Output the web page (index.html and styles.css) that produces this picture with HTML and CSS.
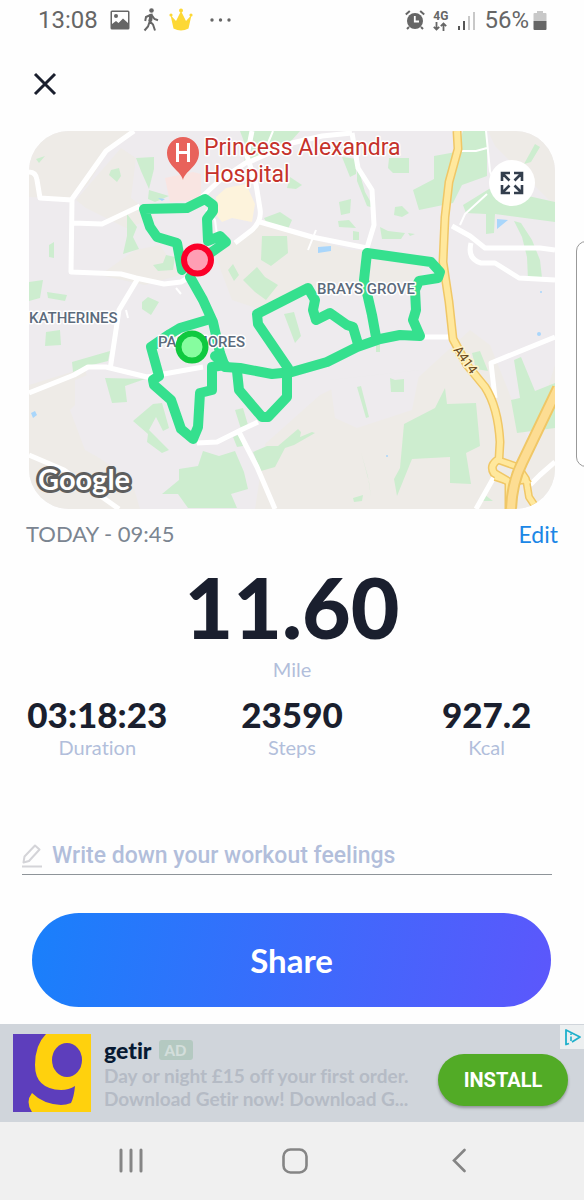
FILE: index.html
```html
<!DOCTYPE html>
<html lang="en">
<head>
  <meta charset="utf-8">
  <meta name="viewport" content="width=device-width, initial-scale=1">
  <title>Workout summary</title>
  <link rel="stylesheet" href="styles.css">
</head>
<body>
  <div class="screen">
    <header class="status">
      <span class="clock">13:08</span>
      <svg class="status-picture" width="20" height="20" viewBox="0 0 20 20">
        <path fill="#666" fill-rule="evenodd" d="M2 0.500h16a1.500 1.500 0 0 1 1.500 1.500v16a1.500 1.500 0 0 1-1.500 1.500H2A1.500 1.500 0 0 1 .5 18V2A1.500 1.500 0 0 1 2 .5zM2 2v12l4-3 2.500 2L13 8.500l5 4.500V2z"/>
        <circle cx="6" cy="6" r="2" fill="#666"/>
      </svg>
      <svg class="status-walk" width="16" height="24" viewBox="0 0 16 24">
        <circle cx="8.500" cy="2.500" r="2.300" fill="#666"/>
        <path d="M8 6.500L6.500 13l3.500 3.500 2 6M6.500 14L5 18.500l-3.500 4M7.500 7L3 9l-.8 4M9 7.500l2.500 3.500 3.500 1.200" fill="none" stroke="#666" stroke-width="2"/>
        <path d="M6.500 6l3-.5.5 3-1 5-3.500-.5z" fill="#666"/>
      </svg>
      <svg class="status-crown" width="24" height="24" viewBox="0 0 24 24">
        <path d="M1.500 7l5.500 6 5-10 5 10 5.500-6-3 13.500q-7.500 4-15 0z" fill="#fdd835"/>
        <g fill="#fdd835"><circle cx="12" cy="2.500" r="2"/><circle cx="2" cy="7" r="1.600"/><circle cx="22" cy="7" r="1.600"/></g>
      </svg>
      <svg class="status-more" width="22" height="4" viewBox="0 0 22 4">
        <g fill="#666"><circle cx="2" cy="2" r="1.700"/><circle cx="10.500" cy="2" r="1.700"/><circle cx="19" cy="2" r="1.700"/></g>
      </svg>

      <svg class="status-alarm" width="20" height="20" viewBox="0 0 20 20">
        <circle cx="10" cy="11" r="8" fill="#666"/>
        <path d="M.8 4.500l4-3.500M19.200 4.500l-4-3.500M4 17l-2 2M16 17l2 2" stroke="#666" stroke-width="2"/>
        <path d="M9.800 6v5.500H14" fill="none" stroke="#fff" stroke-width="1.800"/>
      </svg>
      <span class="network">
        <span>4G</span>
        <svg width="14" height="9" viewBox="0 0 14 9">
          <path d="M3.500 0v7.500M.8 4.800l2.700 2.700 2.700-2.700M10.500 9V1.500M7.800 4.200l2.700-2.700 2.700 2.700" fill="none" stroke="#666" stroke-width="1.800"/>
        </svg>
      </span>
      <svg class="status-signal" width="18" height="19" viewBox="0 0 18 19">
        <path d="M2 15v4M7 10v9" stroke="#555" stroke-width="2"/>
        <path d="M12 5v14M17 1v18" stroke="#c8c8c8" stroke-width="2"/>
      </svg>
      <span class="battery-text">56%</span>
      <svg class="status-battery" width="14" height="19" viewBox="0 0 14 19">
        <path d="M4 0h6v2h2.500q1 0 1 1v7H.5V3q0-1 1-1H4z" fill="#c8c8c8"/>
        <path d="M.5 10h13v8q0 1-1 1h-11q-1 0-1-1z" fill="#666"/>
      </svg>
    </header>

    <button class="close" aria-label="Close">
      <svg width="24" height="24" viewBox="0 0 24 24"><path d="M2 2l20 20M22 2L2 22" stroke="#1a1f2e" stroke-width="3"/></svg>
    </button>

    <main>
      <section class="map">
        <svg class="map-canvas" viewBox="29 131 526 378">
          <!-- land -->
          <path fill="#eeebee" d="M29 131h526v378H29z"/>
          <g fill="#eeebe7">
            <path d="M29 131h105l-28 23-18 30-16 15-43-2z"/>
            <path d="M76 200l45-52 15 10-5 40 25 20-30 10-40-20z"/>
            <path d="M29 385l56-17 5 22-20 20 15 40 45 25 10 34H29z"/>
            <path d="M135 250l25-5 20 30-35 10-45-10z"/>
            <path d="M215 255l50-35 30 15 75 20-8 25-45 5-55 25-30-10z"/>
            <path d="M320 395l30-15 60 5 60-55 20 15 40 100 25-80v144H255l10-65z"/>
            <path d="M488 131h67v75l-60-60zM340 250l30 0 55 10-5 20-60 10z"/>
          </g>
          <path fill="#eeebee" d="M75 380l25-10 10 50 55 55-10 20-60-40-20-50zM330 380l90-10-8 40-55 18-22-10z"/>
          <path fill="#f9e5e2" d="M165 178l28-6 8 2v26l-31 2z"/>
          <path fill="#fdf3dc" d="M216 197l10-9 20-4 9 20-3 18-20-4-10 4-5-6z"/>
          <!-- parks -->
          <g fill="#cdedcf">
            <path d="M136 158l18-1v12l-5 20-8-18zM111 170l8-2 2 8-4 6-8-7zM36 159l9-3-6 7zM127 214l10 13-4 10 6 12-16 5 4-18z"/>
            <path d="M149 190l20 6-14 6-7-3zM153 265l10-2 3-8 9 2-2 13-15 1zM29 282l14-2-3 18-11 3zM47 292l20 3-2 6-17-3zM142 302l6-5 11 5-8 13-9-6zM49 245l5-3v16l-5-1z"/>
            <path d="M46 332l14-2 1 15-16 1zM72 362l38-11-2 10-20 5-15 6zM105 378l40 1-20 7 2 16-15 1zM133 421l20-17 9-1 7 25-6 3-7-14-7 13 8 8 12 12-7 3-15-11 1-8z"/>
            <path d="M162 494l17-14v-11l19-3 5-15 16 5 16-5 9 21 4 17-17 5 6 14h-49l-10-14zM235 410l8-2 5 17-7 4zM233 437l7-3 3 12-6 1zM253 452l14-6h11l20-17 3 3-1 5 12-5 3 1-21 12-9 3-10 19-14 4z"/>
            <path d="M262 236l25 0 1 17-17 13-10-6zM264 218l16-6 12 8-4 9-20-4zM243 280l14-13 8 10 13 8-12 15-11-8zM228 270l5-6 6 11-5 6zM284 314l10-2 7 24-6 7z"/>
            <path d="M339 202l12-3-1 14-9 2zM338 221l11-1 7 8-17-1zM290 177l12 8-6 4-9-1zM342 157l15 2-1 15-6 3zM357 164l8 28 9 16-7-2-10-25zM353 231l6 1v8h-6z"/>
            <path d="M389 158h20v15h-16l-5-5zM413 190l21-11v-23l22-4 7-21h24v45l-25 9-9 18-34 7zM395 207l7-1 7 7-7 4-8-2zM380 227l8 4 17 2-4 6h-19zM408 233l7 1-5 2z"/>
            <path d="M463 205l26-16 30 5 36 8v20l-60-8-1 19-8 1v-20l-20-1zM514 221l7 2 11 17 8 20 2 18-14 2-1-23-5-20zM535 144l5 3-9 15-7 2z"/>
            <path d="M404 424l31-16 10-20 2 16 29-1 4 43-14 7 5 31-21-1v-26l-38 2-15 37-3-17 6-11zM390 378l5 2 9-1v13h-13zM514 360l7-3 14 34 20-8v45l-38 5-6-33 9-2zM357 387l4-1 8 31-3 1zM361 452l8 30 2 15-3-20zM353 498l10-3-1 6-8 1z"/>
            <path d="M472 353l8-2 8 20-12-2zM485 495l8 6h-11zM397 486l5-18-6 14zM240 131h60l-16 18-40 15 2-17zM376 345l4-2v9h-4z"/>
          </g>
          <g fill="#a9d6fb">
            <path d="M318 247l13-1v5l-13 2zM497 219l11 1-11 9zM31 413l4-2 2 4-4 3zM158 198l7 1-3 2z"/>
            <circle cx="539" cy="334" r="2"/><circle cx="387" cy="456" r="1"/><circle cx="541" cy="292" r="1"/>
          </g>
          <!-- small roads -->
          <g class="road">
            <path d="M134 131l-28 20-17 24-17 24M29 172q7 0 8 8l3 18 32 2-1 72 50 2 15 4 28 6 17-2 7-4M73 223l29 1 38-18"/>
            <path d="M137 280l-18 30-9 60M29 393l45-18 14-8h18l41 10 39-7 17-3"/>
            <path d="M197 443l20-1 26-13 15-7M239 432l18 35 18 42M29 455l35 15 55 39"/>
            <path d="M252 131l-5 25 9 28 4 25q2 12-8 21l-17 13M190 208l30-28 27-18M247 163l45-20 30-7 30-3M352 133l6 35 14 22 2 35-7 23-55-11-52-15"/>
            <path d="M452 226l18 10 15 12h55l15 2M471 243q-4 16 10 20h14l24 15 36 2M420 337h30M555 337l-64 26 4 35M494 477l-18 32M555 462l-15 13-10 10"/>
          </g>
          <path class="lane" d="M486 131l4 40 4 10M460 225l5-11 22-20M462 151h14l11-3M217 235l-2-15-9-10M126 310l2 8M176 288l5 6M268 143l5-12M316 230l-8 20"/>
          <!-- A414 and the bypass -->
          <g fill="none" stroke-linejoin="round">
            <path d="M457 131l1 18-9 33-4 35-2 45 6 40 4 37 14 26 18 22q13 20 15 55l-1 17q-10 6-5 14l15 9v27" stroke="#f0c766" stroke-width="9"/>
            <path d="M498 460l20 7 8 12 3 18 8 12M495 477l15 5 15-2 4 4" stroke="#f0c766" stroke-width="8"/>
            <path d="M457 131l1 18-9 33-4 35-2 45 6 40 4 37 14 26 18 22q13 20 15 55l-1 17q-10 6-5 14l15 9v27" stroke="#ffe89d" stroke-width="6"/>
            <path d="M498 460l20 7 8 12 3 18 8 12M495 477l15 5 15-2 4 4" stroke="#ffe89d" stroke-width="5"/>
            <path d="M558 388l-36 75q-10 20-11 46" stroke="#f0c766" stroke-width="12"/>
            <path d="M558 388l-36 75q-10 20-11 46" stroke="#fddd93" stroke-width="8"/>
          </g>
          <!-- walked route -->
          <g class="route">
            <path d="M182 270l-5-27-20-6-7-10-6-18 43-1 18-9 8 6v6l-6 8 1 22 12-5 6 6-20 14"/>
            <path d="M190 277l13 23 10 22 7 31 5 14 15 1 32 6 20-2 35-10 30-15 23-8 20-4 20 1-7-16 3-10-1-20 4-9 19-3 2-6-9-10-64-9-3 27 8 35 4 22"/>
            <path d="M358 344l-5-17-6-2-17-12-14 7-3-10 2-10-7-12-51 26 1 10 30 44"/>
            <path d="M237 371l2 19 23 27h6l19-20v-24"/>
            <path d="M207 320l-27 8-10 6-19 13 8 29-6 4 1 5 17 15 10 29 12 10 5-12 2-34 12-3v-23l13-2-10-9"/>
          </g>
          <!-- labels -->
          <text class="area" x="29" y="323">KATHERINES</text>
          <text class="area" x="158" y="347">PASSMORES</text>
          <text class="area" x="317" y="294">BRAYS GROVE</text>
          <text class="road-name" x="0" y="0" transform="translate(453 350) rotate(54)">A414</text>
          <text class="place" x="204" y="155">Princess Alexandra</text>
          <text class="place" x="204" y="182">Hospital</text>
          <path d="M183 180c-2-9-16-14-16-27a16 16 0 0 1 32 0c0 13-14 18-16 27z" fill="#e8625b"/>
          <path d="M177.500 143v19M188.500 143v19M177.500 152.500h11" stroke="#fff" stroke-width="3"/>
          <circle cx="192" cy="347" r="13.500" fill="#86fd9f" stroke="#10c93f" stroke-width="6"/>
          <circle cx="197.500" cy="260" r="13.500" fill="#ff9eb4" stroke="#fb0029" stroke-width="6"/>
          <text class="google" x="38" y="490">Google</text>
        </svg>
        <button class="expand" aria-label="Full screen map">
          <svg width="24" height="24" viewBox="0 0 24 24">
            <path d="M10 2H2v8M2 2l7.500 7.500M14 2h8v8M22 2l-7.500 7.500M10 22H2v-8M2 22l7.500-7.500M14 22h8v-8M22 22l-7.500-7.500" fill="none" stroke="#333e4d" stroke-width="2.600"/>
          </svg>
        </button>
      </section>

      <div class="when">
        <span>TODAY - 09:45</span>
        <a href="#">Edit</a>
      </div>

      <div class="distance">11.60</div>
      <div class="unit">Mile</div>

      <div class="stats">
        <div><div class="value">03:18:23</div><div class="unit">Duration</div></div>
        <div><div class="value">23590</div><div class="unit">Steps</div></div>
        <div><div class="value">927.2</div><div class="unit">Kcal</div></div>
      </div>

      <label class="note">
        <svg width="20" height="24" viewBox="0 0 20 24">
          <path d="M1.500 18.500l1-6L13 1.500l4.500 4L7 17zM0 22.500h20" fill="none" stroke="#d4d4d8" stroke-width="2" stroke-linejoin="round"/>
        </svg>
        <input type="text" placeholder="Write down your workout feelings" aria-label="Workout feelings">
      </label>

      <button class="share">Share</button>
    </main>

    <aside class="ad">
      <svg class="ad-logo" width="78" height="78" viewBox="0 0 78 78">
        <path fill="#5d3ebc" d="M0 0h78v78H0z"/>
        <path fill="#ffd10d" d="M33 0h45v78H19q-7-10 0-19 11 11 29 12 5 0 10-2 3-6 4-17-6 4-14 4-26-1-26-25Q22 11 33 0z"/>
        <ellipse cx="54" cy="26" rx="15" ry="17" fill="#5d3ebc"/>
      </svg>
      <div class="ad-text">
        <div class="ad-title">getir <span class="ad-tag">AD</span></div>
        <p>Day or night £15 off your first order.<br>Download Getir now! Download G...</p>
      </div>
      <button class="install">INSTALL</button>
      <a class="ad-choices" href="#" aria-label="Ad choices">
        <svg width="18" height="18" viewBox="0 0 18 18">
          <path d="M5 15.500l-3 1V2l14 7-8 5" fill="none" stroke="#1fb0cb" stroke-width="1.800" stroke-linejoin="round"/>
          <path d="M7 5.500v1.500M7 8.500V13" stroke="#1fb0cb" stroke-width="1.600"/>
        </svg>
      </a>
    </aside>

    <nav class="system-nav">
      <button aria-label="Recent apps"><svg width="24" height="26" viewBox="0 0 24 26"><path d="M2 2v21M12 2v21M22 2v21" stroke="#858585" stroke-width="3" stroke-linecap="round"/></svg></button>
      <button aria-label="Home"><svg width="26" height="26" viewBox="0 0 26 26"><rect x="1.500" y="1.500" width="23" height="23" rx="7" fill="none" stroke="#858585" stroke-width="2.600"/></svg></button>
      <button aria-label="Back"><svg width="14" height="26" viewBox="0 0 14 26"><path d="M12.500 2L2 12.500 12.500 23" fill="none" stroke="#858585" stroke-width="2.600" stroke-linecap="round"/></svg></button>
    </nav>

    <div class="edge-panel"></div>
  </div>
</body>
</html>
```
FILE: styles.css
```css
* {
  box-sizing: border-box;
}
body {
  margin: 0;
  background-color: #fefefe;
  font-family: Lato, sans-serif;
  font-variant-ligatures: none;
  color: #1a1f2e;
}
button {
  border: none;
  padding: 0;
  background: none;
  color: inherit;
  font-family: inherit;
  cursor: pointer;
}
a {
  color: #1b87e6;
  text-decoration: none;
}
svg {
  display: block;
}
.screen {
  position: relative;
  overflow: hidden;
  min-height: 100vh;
  display: flex;
  flex-direction: column;
}

/* status bar */
.status {
  display: flex;
  align-items: center;
  height: 40px;
  padding: 0 37px 0 38px;
  font-family: Roboto, sans-serif;
  font-size: 24px;
  color: #666;
}
.status-picture {
  margin-left: 12px;
}
.status-walk {
  margin-left: 13px;
}
.status-crown {
  margin-left: 10px;
}
.status-more {
  margin-left: 17px;
}
.status-alarm {
  margin-left: auto;
}
.network {
  margin-left: 8px;
  font-size: 12px;
  font-weight: 700;
  line-height: 12px;
}
.status-signal {
  margin-left: 9px;
}
.battery-text {
  margin-left: 9px;
}
.status-battery {
  margin-left: 4px;
}

.close {
  align-self: flex-start;
  margin: 32px 0 0 33px;
}

/* map */
.map {
  position: relative;
  margin: 35px 29px 0;
  border-radius: 40px;
  overflow: hidden;
}
.map-canvas {
  width: 100%;
}
.road {
  fill: none;
  stroke: #fff;
  stroke-width: 5;
  stroke-linejoin: round;
}
.lane {
  fill: none;
  stroke: #fff;
  stroke-width: 2;
}
.route {
  fill: none;
  stroke: #35e08e;
  stroke-width: 10;
  stroke-linejoin: round;
  stroke-linecap: round;
}
.map text {
  font-family: Roboto, sans-serif;
  paint-order: stroke;
  stroke: #fff;
  stroke-width: 3px;
  stroke-linejoin: round;
}
.map .area {
  font-size: 15px;
  font-weight: 500;
  fill: #5c6b7c;
}
.map .place {
  font-size: 23px;
  fill: #c5322b;
}
.map .road-name {
  font-size: 13px;
  fill: #6b4a1c;
  stroke: #fff3c4;
}
.map .google {
  font-family: Lato, sans-serif;
  font-size: 29px;
  font-weight: 700;
  fill: #fff;
  stroke: #5e5e5e;
  stroke-width: 6px;
}
.expand {
  position: absolute;
  top: 29px;
  right: 20px;
  width: 46px;
  height: 46px;
  border-radius: 50%;
  background-color: #fff;
  display: grid;
  place-items: center;
}

/* summary */
.when {
  display: flex;
  justify-content: space-between;
  margin: 11px 26px 0;
  font-size: 22px;
  line-height: 28px;
  color: #7b8591;
}
.when a {
  font-size: 23px;
}
.distance {
  margin-top: 9px;
  font-size: 84px;
  font-weight: 900;
  line-height: 100px;
  text-align: center;
}
.unit {
  font-size: 20px;
  line-height: 24px;
  text-align: center;
  color: #b2bedb;
}
.stats {
  display: grid;
  grid-template-columns: repeat(3, 1fr);
  margin-top: 12px;
  text-align: center;
}
.value {
  font-size: 35px;
  font-weight: 900;
  line-height: 42px;
}

.note {
  display: flex;
  align-items: center;
  gap: 10px;
  height: 38px;
  margin: 78px 32px 0 22px;
  border-bottom: 1px solid #8e9499;
}
.note input {
  flex: 1;
  min-width: 0;
  border: none;
  outline: none;
  padding: 0;
  background: none;
  font-family: Roboto, sans-serif;
  font-size: 23px;
  font-weight: 500;
}
.note input::placeholder {
  color: #b2bedb;
}
.share {
  display: block;
  width: calc(100% - 65px);
  height: 94px;
  margin: 38px 0 0 32px;
  border-radius: 47px;
  background: linear-gradient(100deg, #1980fb, #5c57fc);
  color: #fff;
  font-size: 33px;
  font-weight: 700;
}

/* ad */
.ad {
  position: relative;
  display: flex;
  align-items: center;
  height: 98px;
  margin-top: 17px;
  padding: 0 16px 0 13px;
  background-color: #d0d5db;
}
.ad-text {
  flex: 1;
  margin-left: 13px;
  white-space: nowrap;
}
.ad-title {
  display: flex;
  align-items: center;
  gap: 7px;
  font-size: 23px;
  font-weight: 900;
  line-height: 28px;
  color: #071a33;
}
.ad-tag {
  padding: 0 6px;
  border-radius: 3px;
  background-color: #b4c9c1;
  color: #d3dedb;
  font-size: 15px;
  line-height: 20px;
}
.ad p {
  margin: 0;
  font-size: 19px;
  font-weight: 700;
  line-height: 23px;
  color: #b5bbc5;
}
.install {
  width: 130px;
  height: 52px;
  margin-top: 14px;
  border-radius: 26px;
  background-color: #52ab26;
  box-shadow: 0 2px 3px rgba(0, 0, 0, 0.3);
  color: #fff;
  font-family: Roboto, sans-serif;
  font-size: 20px;
  font-weight: 700;
}
.ad-choices {
  position: absolute;
  top: 1px;
  right: 0;
  padding: 3px 2px 3px 4px;
  background-color: #eceff0;
}

.system-nav {
  flex: 1;
  display: flex;
  justify-content: space-between;
  align-items: center;
  min-height: 78px;
  padding: 0 112px 0 118px;
  background-color: #f0f0f0;
}
.system-nav button {
  width: 26px;
}
.system-nav svg {
  margin: 0 auto;
}

/* handle of the edge panel, half off screen */
.edge-panel {
  position: absolute;
  top: 241px;
  right: -12px;
  width: 20px;
  height: 226px;
  border: 1px solid #999;
  border-radius: 10px;
  background-color: #fff;
}
```
